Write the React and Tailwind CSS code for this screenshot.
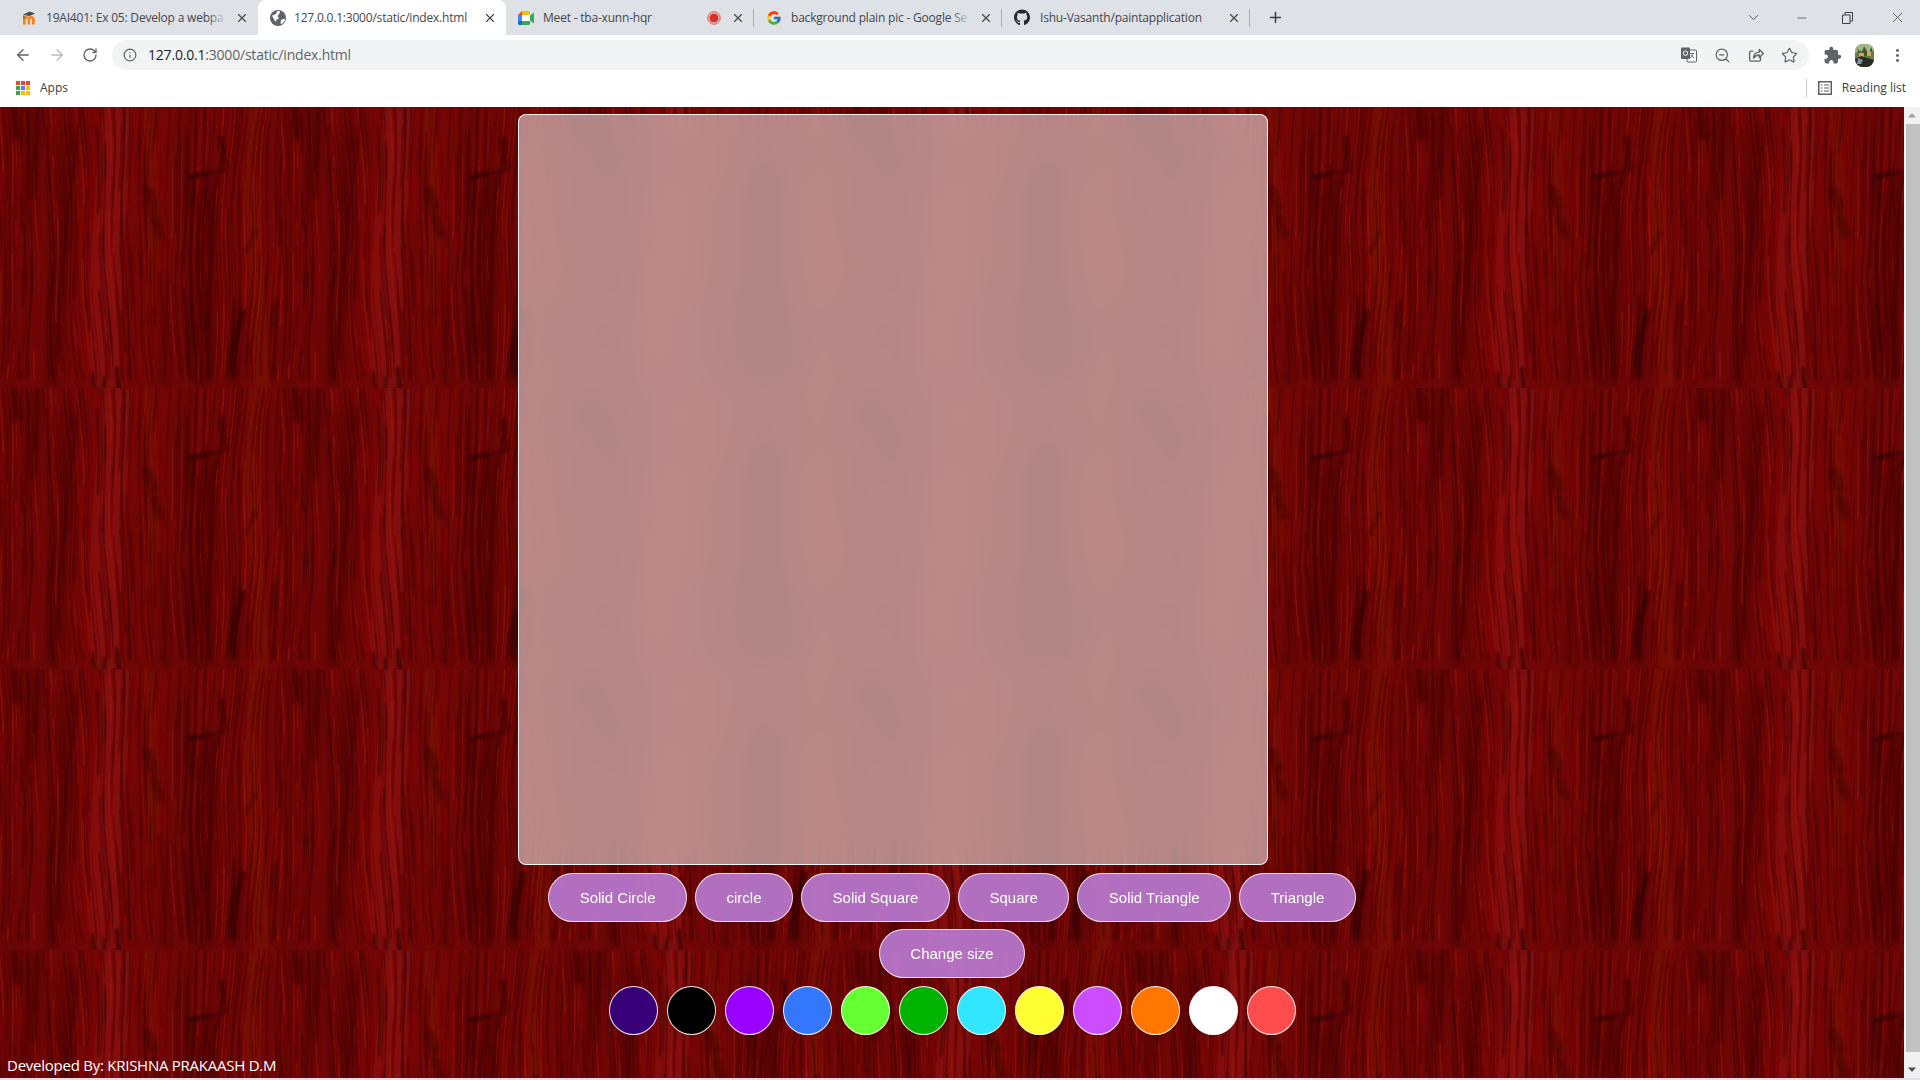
import { ArrowLeft, ArrowRight, RotateCw, Info, X, Plus, ChevronDown, Minus, ZoomOut, Star, MoreVertical } from 'lucide-react';
import { FaGithub } from 'react-icons/fa';
import { FcGoogle } from 'react-icons/fc';
import { MdExtension } from 'react-icons/md';

const SHAPES = ['Solid Circle', 'circle', 'Solid Square', 'Square', 'Solid Triangle', 'Triangle'];
const COLORS = ['#370078', '#000000', '#9900ff', '#3377ff', '#66ff33', '#00b300', '#33e6ff', '#ffff33', '#cc4dff', '#ff7700', '#ffffff', '#ff4d4d'];

// small seeded random so the wood grain stays the same on every load
function makeRandom(seed) {
  let s = seed;
  return () => {
    s = (s * 16807) % 2147483647;
    return (s - 1) / 2147483646;
  };
}

function grainPath(x) {
  const points = [];
  for (let y = 0; y <= 281; y += 16) {
    const bend = 4 * Math.sin(y / 70 + x / 60) + 1.5 * Math.sin(y / 29 + x / 17) + (y - 140) * 0.07 * Math.sin(x / 55);
    points.push(`${(x + bend).toFixed(1)} ${y}`);
  }
  return 'M' + points.join('L');
}

const rand = makeRandom(4217);
const GRAIN = Array.from({ length: 300 }, (_, i) => {
  const dark = rand() > 0.45;
  const len = 30 + rand() * 130;
  return {
    id: i,
    d: grainPath(rand() * 300 - 10),
    color: dark ? '#360000' : '#9c120e',
    width: 0.6 + rand() * (dark ? 2.6 : 2),
    opacity: 0.1 + rand() * 0.3,
    dash: `${len.toFixed(0)} ${(15 + rand() * 80).toFixed(0)}`,
    dashOffset: (rand() * 200).toFixed(0),
  };
});

// wide soft bands of lighter and darker wood: [path, colour, width, opacity]
const BANDS = [
  ['M118 0C112 90 100 180 108 281', '#8e100c', 32, 0.7],
  ['M255 0C250 90 258 190 262 281', '#860d0a', 16, 0.5],
  ['M150 0C148 60 160 120 150 200', '#860d0a', 12, 0.5],
  ['M70 20C66 90 58 180 52 281', '#3c0000', 16, 0.5],
  ['M205 70C204 140 200 200 202 281', '#3c0000', 22, 0.5],
  ['M8 0C6 90 4 190 8 281', '#480000', 12, 0.4],
  ['M165 170C166 210 168 250 166 281', '#3c0000', 9, 0.4],
  ['M36 0C36 40 34 70 30 110', '#3c0000', 10, 0.45],
  ['M240 190C234 220 232 250 234 281', '#3c0000', 10, 0.45],
];

// the darker marks that can be picked out in the tile: [path, width, opacity]
const KNOTS = [
  ['M14 0L17 30', 7, 0.45],
  ['M38 0C36 30 36 60 33 90', 5, 0.35],
  ['M80 4C78 40 72 70 68 100C64 140 60 190 57 250', 3, 0.35],
  ['M190 70L204 67', 5, 0.7],
  ['M204 67L226 63', 3, 0.55],
  ['M222 32L225 58', 7, 0.45],
  ['M190 72C192 120 193 180 188 260', 3, 0.4],
  ['M216 70C214 130 206 190 210 270', 4, 0.38],
  ['M148 84L154 100', 10, 0.38],
  ['M154 110L160 128', 9, 0.38],
  ['M160 165C162 200 166 240 164 275', 2, 0.45],
  ['M122 205L126 245', 2, 0.55],
  ['M243 205C236 225 232 245 234 268', 6, 0.55],
  ['M92 266L95 281', 4, 0.6],
  ['M105 270L104 281', 4, 0.55],
  ['M117 262L119 281', 5, 0.65],
  ['M255 125L246 146', 4, 0.35],
];

function WoodBackground() {
  return (
    <svg className="absolute inset-0 w-full h-full" aria-hidden="true">
      <defs>
        <filter id="band" x="-30%" y="-5%" width="160%" height="110%">
          <feGaussianBlur stdDeviation="5 9" />
        </filter>
        <filter id="soft" x="-5%" y="-5%" width="110%" height="110%">
          <feGaussianBlur stdDeviation="0.7 2" />
        </filter>
        <filter id="softer" x="-30%" y="-30%" width="160%" height="160%">
          <feGaussianBlur stdDeviation="1.800" />
        </filter>
        <pattern id="wood" x="0" y="0" width="281" height="281" patternUnits="userSpaceOnUse">
          <rect width="281" height="281" fill="#6e0606" />
          <g filter="url(#band)">
            {BANDS.map(([d, c, w, o]) => (
              <path key={d} d={d} fill="none" stroke={c} strokeWidth={w} strokeOpacity={o} />
            ))}
          </g>
          <g filter="url(#soft)">
            {GRAIN.map(g => (
              <path key={g.id} d={g.d} fill="none" stroke={g.color} strokeWidth={g.width} strokeOpacity={g.opacity} strokeDasharray={g.dash} strokeDashoffset={g.dashOffset} />
            ))}
          </g>
          <g filter="url(#softer)">
            {KNOTS.map(([d, w, o]) => (
              <path key={d} d={d} fill="none" stroke="#2c0000" strokeWidth={w} strokeOpacity={o} strokeLinecap="round" />
            ))}
          </g>
        </pattern>
      </defs>
      <rect width="100%" height="100%" fill="url(#wood)" />
    </svg>
  );
}

function MoodleIcon() {
  return (
    <svg width="17" height="16" viewBox="0 0 17 16">
      <path d="M1 15V8.500C1 6.500 2.500 6 4 6c1.200 0 2 .5 2.500 1.200C7 6.500 8 6 9.500 6c2.500 0 4 1.200 4 3.500V15h-3V9.800c0-.9-.3-1.300-1-1.300s-1 .4-1 1.300V15H6V9.800c0-.9-.3-1.300-1-1.300s-1 .4-1 1.300V15z" fill="#f98012" />
      <path d="M1 4.500L8 1l6 2.200-6 2.800z" fill="#4a4a4a" />
      <path d="M2 5v4" stroke="#4a4a4a" strokeWidth="1" />
    </svg>
  );
}

function GlobeIcon() {
  return (
    <svg width="16" height="16" viewBox="0 0 16 16">
      <circle cx="8" cy="8" r="8" fill="#5f6368" />
      <path d="M2 5.500L6 4l1-2.800 3-.2-.5 2.500L7.500 6 9 8.500 6.500 9.500 6 12 4 9.500zM11 10l3.500-1.500.5 2-2.500 3L10.500 14z" fill="#fff" />
    </svg>
  );
}

function MeetIcon() {
  return (
    <svg width="16" height="14" viewBox="0 0 16 14">
      <path d="M0 4L4 0v4z" fill="#ea4335" />
      <path d="M0 4h4v6H0z" fill="#4285f4" />
      <path d="M0 10h4v4H1.500C.6 14 0 13.400 0 12.500z" fill="#1967d2" />
      <path d="M4 0h6.500c.8 0 1.500.7 1.500 1.500V4H4z" fill="#fbbc04" />
      <path d="M4 10h8v2.500c0 .8-.7 1.500-1.500 1.500H4z" fill="#34a853" />
      <path d="M12 4.500L16 1.500v11L12 9.500z" fill="#34a853" />
      <path d="M4 4h8v6H4z" fill="#fff" />
    </svg>
  );
}

function RecordIcon() {
  return (
    <svg width="14" height="14" viewBox="0 0 14 14">
      <circle cx="7" cy="7" r="6.200" fill="none" stroke="#ea4335" strokeWidth="1" />
      <circle cx="7" cy="7" r="4.600" fill="#d93025" />
    </svg>
  );
}

function TranslateIcon() {
  return (
    <svg width="16" height="16" viewBox="0 0 16 16">
      <rect x="6" y="3" width="9.500" height="12" rx="1" fill="#fff" stroke="#5f6368" strokeWidth="1" />
      <path d="M9 6.500h4M12 6.500c-.4 2-1.500 3.500-3 4.500M10 8c.6 1.200 1.600 2.300 3 3" fill="none" stroke="#5f6368" strokeWidth="0.9" />
      <rect x="0" y="0.500" width="9" height="11.500" rx="1" fill="#5f6368" />
      <circle cx="4.500" cy="6.200" r="2.200" fill="none" stroke="#fff" strokeWidth="1" />
    </svg>
  );
}

function ShareIcon() {
  return (
    <svg width="16" height="16" viewBox="0 0 16 16" fill="none" stroke="currentColor" strokeWidth="1.300">
      <path d="M12.500 10v2.800c0 .8-.6 1.400-1.400 1.400H3c-.8 0-1.400-.6-1.400-1.400V5.500c0-.8.6-1.400 1.400-1.400h2.500" />
      <path d="M5.500 11c.3-3.500 2.700-5.800 5.800-5.800V2.500l4 4-4 4V8C8.800 8 7 9 5.500 11z" strokeLinejoin="round" />
    </svg>
  );
}

function ReadingListIcon() {
  return (
    <svg width="14" height="14" viewBox="0 0 14 14" fill="none" stroke="#5f6368">
      <rect x="0.750" y="0.750" width="12.500" height="12.500" strokeWidth="1.500" />
      <path d="M3 4h1.500M6 4h5M3 7h1.500M6 7h5M3 10h1.500M6 10h5" strokeWidth="1.200" />
    </svg>
  );
}

function AppsIcon() {
  const dots = ['#ea4335', '#ea4335', '#ea4335', '#34a853', '#4285f4', '#fbbc04', '#34a853', '#fbbc04', '#fbbc04'];
  return (
    <div className="grid grid-cols-3 gap-[1px] w-[14px] h-[14px]">
      {dots.map((c, i) => (
        <svg key={i} width="4" height="4" viewBox="0 0 4 4"><rect width="4" height="4" fill={c} /></svg>
      ))}
    </div>
  );
}

function Avatar() {
  return (
    <svg width="19" height="23" viewBox="0 0 19 23">
      <defs>
        <clipPath id="oval"><rect width="19" height="23" rx="8" /></clipPath>
      </defs>
      <g clipPath="url(#oval)">
        <rect width="19" height="23" fill="#6d7a45" />
        <path d="M0 0h19v6L12 9 5 6 0 9z" fill="#a5b78c" />
        <path d="M2 3l4 8 3-9 4 7 4-6v5l-5 4H4z" fill="#43552c" />
        <path d="M4 9h5v5H4zM12 7h4v5h-4z" fill="#c8a95a" />
        <path d="M0 15l6-3 13 4v7H0z" fill="#2a2b27" />
        <path d="M3 14l5 2-2 4H2z" fill="#7f94a8" />
      </g>
    </svg>
  );
}

function Tab({ icon, title, active, extra, last, fade = false, iconGap = 'mr-2' }) {
  return (
    <div className={`relative flex items-center w-[248px] h-[35px] pl-3 pr-[9px] ${active ? 'bg-white rounded-t-lg' : ''}`}>
      <span className={`w-4 h-4 flex items-center justify-center shrink-0 ${iconGap}`}>{icon}</span>
      <span className="relative flex-1 whitespace-nowrap text-xs tracking-[-0.2px] text-[#45474a] mr-2">
        {title}
        {fade && <span className="absolute right-0 top-0 bottom-0 w-5 bg-gradient-to-r from-transparent to-[#dee1e6]" />}
      </span>
      {extra && <span className="mr-2.5">{extra}</span>}
      <X size={14} strokeWidth={2} className="text-[#45474a] shrink-0" />
      {last && <span className="absolute right-0 top-[9px] h-[18px] w-px bg-[#a9acb0]" />}
    </div>
  );
}

function BrowserChrome() {
  return (
    <div className="shrink-0" style={{ fontFamily: '"Open Sans", "Noto Sans", sans-serif' }}>
      {/* tab strip */}
      <div className="h-[35px] bg-[#dee1e6] flex items-center pl-[10px]">
        <Tab icon={<MoodleIcon />} title="19AI401: Ex 05: Develop a webpa" fade />
        <Tab icon={<GlobeIcon />} title="127.0.0.1:3000/static/index.html" active />
        <Tab icon={<MeetIcon />} title="Meet - tba-xunn-hqr" extra={<RecordIcon />} last iconGap="mr-[9px]" />
        <Tab icon={<FcGoogle size={16} />} title="background plain pic - Google Se" last fade iconGap="mr-[9px]" />
        <Tab icon={<FaGithub size={17} color="#24292f" />} title="Ishu-Vasanth/paintapplication" last iconGap="mr-[10px]" />
        <Plus size={17} strokeWidth={2.2} className="ml-[17px] text-[#3c4043]" />
        <div className="ml-auto flex items-center text-[#3c4043]">
          <ChevronDown size={17} strokeWidth={1.2} className="mr-[33px]" />
          <Minus size={14} strokeWidth={1.2} className="mr-[33px]" />
          <svg width="11" height="12" viewBox="0 0 11 12" className="mr-[36px]">
            <path d="M.5 3h7.500v8.500H.5zM3 3V.500h7.500V9H8" fill="none" stroke="currentColor" strokeWidth="1" />
          </svg>
          <X size={17} strokeWidth={1.1} className="mr-[14px]" />
        </div>
      </div>
      {/* toolbar */}
      <div className="h-[40px] bg-white flex items-center pl-[14px] pr-[14px]">
        <ArrowLeft size={18} strokeWidth={1.8} className="text-[#5f6368]" />
        <ArrowRight size={18} strokeWidth={1.8} className="text-[#b9bbbe] ml-[16px]" />
        <RotateCw size={16} strokeWidth={1.9} className="text-[#5f6368] ml-[16px]" />
        <div className="ml-[14px] flex-1 h-[30px] bg-[#f1f3f4] rounded-full flex items-center pl-[11px] pr-[11px] mr-[14px]">
          <Info size={14} strokeWidth={2} className="text-[#5f6368]" />
          <span className="ml-[11px] text-sm tracking-[-0.2px] text-[#202124]">127.0.0.1<span className="text-[#5f6368]">:3000/static/index.html</span></span>
          <div className="ml-auto flex items-center gap-[17px] text-[#5f6368]">
            <TranslateIcon />
            <ZoomOut size={17} strokeWidth={1.7} />
            <ShareIcon />
            <Star size={17} strokeWidth={1.7} />
          </div>
        </div>
        <MdExtension size={19} className="text-[#5f6368]" />
        <span className="ml-[13px] flex"><Avatar /></span>
        <MoreVertical size={17} strokeWidth={2.2} className="text-[#5f6368] ml-[15px]" />
      </div>
      {/* bookmarks bar */}
      <div className="h-[32px] bg-white flex items-center pl-[16px] pr-[14px] pb-[7px]">
        <AppsIcon />
        <span className="ml-[10px] text-xs text-[#3c4043]">Apps</span>
        <div className="ml-auto flex items-center">
          <span className="w-px h-[18px] bg-[#c4c7ca] mr-[11px]" />
          <span className="flex mr-[10px]"><ReadingListIcon /></span>
          <span className="text-xs text-[#3c4043]">Reading list</span>
        </div>
      </div>
    </div>
  );
}

function PillButton({ label }) {
  return (
    <button className="h-[49px] px-[30.500px] pt-px rounded-[25px] border border-white/80 bg-[rgba(192,130,224,0.85)] backdrop-blur-[2px] text-white text-[15px] whitespace-nowrap">
      {label}
    </button>
  );
}

export default function App() {
  return (
    <div className="h-screen flex flex-col overflow-hidden bg-[#dee1e6]">
      <BrowserChrome />

      <div className="flex-1 flex min-h-0 mb-[2px]">
        {/* page */}
        <div className="relative flex-1 flex flex-col" style={{ fontFamily: '"Liberation Sans", Arial, sans-serif' }}>
          <WoodBackground />

          <div className="relative mt-[7px] ml-[518px] w-[750px] h-[751px] rounded-lg border border-white/90 bg-white/[0.52] backdrop-blur-[18px]" />

          <div className="relative mt-2 flex justify-center gap-2">
            {SHAPES.map(s => <PillButton key={s} label={s} />)}
          </div>
          <div className="relative mt-[7px] flex justify-center">
            <PillButton label="Change size" />
          </div>
          <div className="relative mt-2 flex justify-center gap-[9px]">
            {COLORS.map(c => (
              <button key={c} className="w-[49px] h-[49px] rounded-full border border-white/90" style={{ backgroundColor: c }} />
            ))}
          </div>

          <div className="relative mt-auto pl-[7px] pb-[2px] text-[15px] tracking-[-0.25px] text-white" style={{ fontFamily: '"Open Sans", "Noto Sans", sans-serif' }}>
            Developed By: KRISHNA PRAKAASH D.M
          </div>
        </div>

        {/* scrollbar */}
        <div className="w-4 bg-[#f1f1f1] flex flex-col items-end">
          <svg width="16" height="17" viewBox="0 0 16 17"><path d="M4 10.500L8 6l4 4.500z" fill="#a3a3a3" /></svg>
          <div className="w-[14px] flex-1 bg-[#c1c1c1] mb-[9px]" />
          <svg width="16" height="17" viewBox="0 0 16 17"><path d="M4 6.500L8 11l4-4.500z" fill="#505050" /></svg>
        </div>
      </div>
    </div>
  );
}
